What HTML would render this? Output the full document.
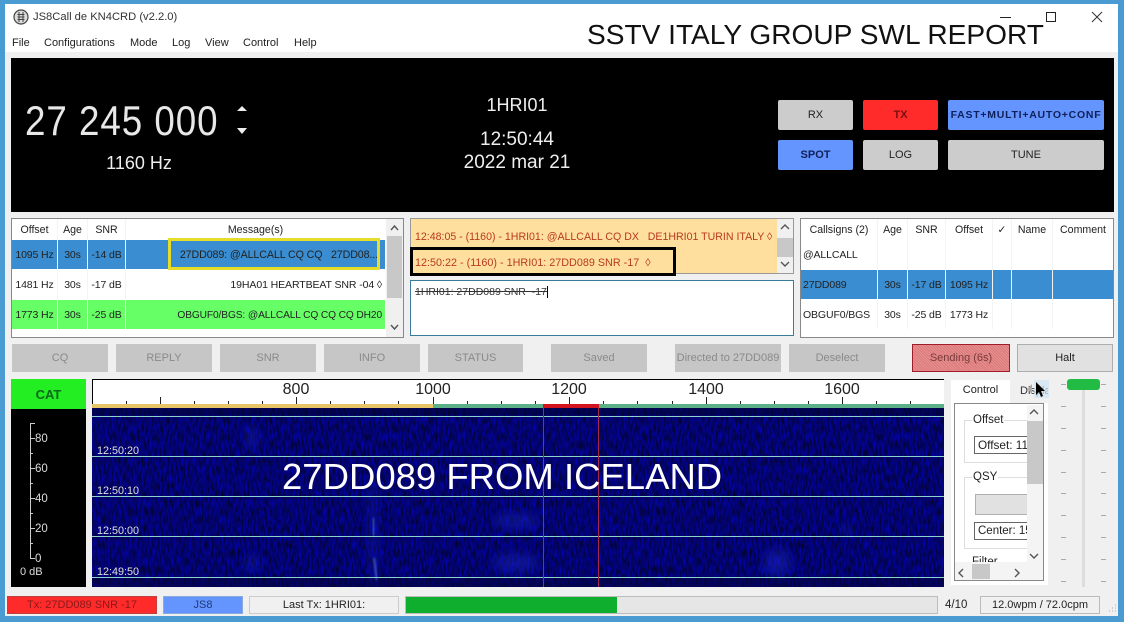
<!DOCTYPE html>
<html><head><meta charset="utf-8"><style>
html,body{margin:0;padding:0}
body{width:1124px;height:622px;overflow:hidden;position:relative;background:#4a9bd1;font-family:"Liberation Sans",sans-serif;color:#222}
div,span{position:absolute;box-sizing:border-box}
.t{white-space:nowrap;font-size:11px;line-height:14px}
.c{text-align:center}
.b{background:#c6c6c6;color:#8a8a8a;font-size:11px;text-align:center;line-height:28px;top:344px;height:28px}
.p{border-radius:2px;background:#ccc;color:#222;font-size:11px;text-align:center;line-height:30px;height:30px}
.h{top:219px;height:21px;line-height:22px;font-size:10.6px;text-align:center;color:#222;white-space:nowrap}
.cell{font-size:10.5px;letter-spacing:-.12px;line-height:31px;text-align:center;color:#222;white-space:nowrap}
.sep{width:1px;background:#f4f4f4}
</style></head><body>
<div style="left:5px;top:4px;width:1113px;height:612px;background:#f0f0f0"></div>
<div style="left:5px;top:4px;width:1113px;height:48px;background:#fff"></div>

<svg style="position:absolute;left:12px;top:8px" width="18" height="18" viewBox="0 0 18 18"><circle cx="9" cy="9" r="7" fill="#ddd" stroke="#444" stroke-width="1.2"/><path d="M7 4v10M11 4v10M5.500 6.500h7M5.500 9h7M5.500 11.500h7" stroke="#444" fill="none"/></svg>
<div class="t" style="left:33px;top:10px;font-size:11.2px;color:#333">JS8Call de KN4CRD (v2.2.0)</div>
<div class="t" style="left:12px;top:36px">File</div>
<div class="t" style="left:44px;top:36px">Configurations</div>
<div class="t" style="left:130px;top:36px">Mode</div>
<div class="t" style="left:172px;top:36px">Log</div>
<div class="t" style="left:205px;top:36px">View</div>
<div class="t" style="left:243px;top:36px">Control</div>
<div class="t" style="left:294px;top:36px">Help</div>
<div class="t" style="left:587px;top:20px;font-size:28.1px;line-height:30px;color:#111">SSTV ITALY GROUP SWL REPORT</div>
<div style="left:1000px;top:17px;width:11px;height:1px;background:#222"></div>
<div style="left:1046px;top:12px;width:10px;height:10px;border:1px solid #222"></div>
<svg style="position:absolute;left:1091px;top:11px" width="12" height="12"><path d="M1 1L11 11M11 1L1 11" stroke="#333" fill="none"/></svg>

<!-- black panel -->
<div style="left:11px;top:58px;width:1103px;height:154px;background:#000"></div>
<div class="t" style="left:25px;top:96px;color:#e8e8e8;font-size:42px;line-height:50px;transform-origin:0 50%;transform:scaleX(.875);letter-spacing:1.1px">27 245 000</div>
<svg style="position:absolute;left:235px;top:103px" width="14" height="36"><path d="M2 8L7 3L12 8ZM2 25L12 25L7 31Z" fill="#eee"/></svg>
<div class="t c" style="left:79px;top:153px;width:120px;color:#eee;font-size:18px;line-height:20px">1160 Hz</div>
<div class="t c" style="left:417px;top:95px;width:200px;color:#eee;font-size:18px;line-height:20px">1HRI01</div>
<div class="t c" style="left:417px;top:130px;width:200px;color:#eee;font-size:19px;line-height:20px">12:50:44</div>
<div class="t c" style="left:417px;top:153px;width:200px;color:#eee;font-size:19px;line-height:20px">2022 mar 21</div>

<div class="p" style="left:778px;top:100px;width:75px">RX</div>
<div class="p" style="left:863px;top:100px;width:75px;background:#ff2a2a;color:#7a1010;font-weight:bold">TX</div>
<div class="p" style="left:948px;top:100px;width:156px;background:#6495ff;color:#10205a;font-weight:bold;letter-spacing:.75px;font-size:10.5px;white-space:nowrap">FAST+MULTI+AUTO+CONF</div>
<div class="p" style="left:778px;top:140px;width:75px;background:#6495ff;color:#10205a;font-weight:bold">SPOT</div>
<div class="p" style="left:863px;top:140px;width:75px">LOG</div>
<div class="p" style="left:948px;top:140px;width:156px">TUNE</div>

<!-- left table -->
<div style="left:11px;top:218px;width:393px;height:120px;background:#fff;border:1px solid #888"></div>
<div class="h" style="left:12px;width:45px">Offset</div>
<div class="h" style="left:58px;width:29px">Age</div>
<div class="h" style="left:88px;width:37px">SNR</div>
<div class="h" style="left:126px;width:259px">Message(s)</div>
<div style="left:12px;top:240px;width:373px;height:29px;background:#3a8dd0"></div>
<div style="left:12px;top:300px;width:373px;height:29px;background:#66ff66"></div>
<div class="cell" style="left:12px;top:240px;width:45px">1095 Hz</div>
<div class="cell" style="left:58px;top:240px;width:29px">30s</div>
<div class="cell" style="left:88px;top:240px;width:37px">-14 dB</div>
<div class="cell" style="left:12px;top:270px;width:45px">1481 Hz</div>
<div class="cell" style="left:58px;top:270px;width:29px">30s</div>
<div class="cell" style="left:88px;top:270px;width:37px">-17 dB</div>
<div class="cell" style="left:12px;top:300px;width:45px">1773 Hz</div>
<div class="cell" style="left:58px;top:300px;width:29px">30s</div>
<div class="cell" style="left:88px;top:300px;width:37px">-25 dB</div>
<div class="cell" style="right:746px;top:240px;text-align:right;font-size:10.7px">27DD089: @ALLCALL CQ CQ &nbsp; 27DD08...</div>
<div class="cell" style="right:742px;top:270px;text-align:right;font-size:10.55px">19HA01 HEARTBEAT SNR -04 ◊</div>
<div class="cell" style="right:742px;top:300px;text-align:right;font-size:10.2px">OBGUF0/BGS: @ALLCALL CQ CQ CQ DH20</div>
<div class="sep" style="left:57px;top:219px;height:110px"></div>
<div class="sep" style="left:87px;top:219px;height:110px"></div>
<div class="sep" style="left:125px;top:219px;height:110px"></div>
<div style="left:168px;top:238px;width:212px;height:32px;border:3px solid #e6dc2a"></div>
<div style="left:386px;top:219px;width:17px;height:118px;background:#f0f0f0"></div>
<div style="left:387px;top:236px;width:15px;height:62px;background:#c8c8c8"></div>
<svg style="position:absolute;left:389px;top:223px" width="11" height="110"><path d="M2 7L5.500 3L9 7M2 102L5.500 106L9 102" stroke="#555" stroke-width="1.4" fill="none"/></svg>

<!-- center -->
<div style="left:410px;top:218px;width:384px;height:56px;background:#ffdf9e;border:1px solid #999"></div>
<div class="t" style="left:415px;top:230px;color:#b83a20;font-size:10.6px">12:48:05 - (1160) - 1HRI01: @ALLCALL CQ DX &nbsp; DE1HRI01 TURIN ITALY ◊</div>
<div class="t" style="left:415px;top:256px;color:#b83a20;font-size:10.8px">12:50:22 - (1160) - 1HRI01: 27DD089 SNR -17 &nbsp;◊</div>
<div style="left:777px;top:219px;width:16px;height:54px;background:#f0f0f0"></div>
<div style="left:777px;top:238px;width:16px;height:19px;background:#c8c8c8"></div>
<svg style="position:absolute;left:779px;top:222px" width="12" height="50"><path d="M2 7L6 3L10 7M2 40L6 44L10 40" stroke="#555" stroke-width="1.4" fill="none"/></svg>
<div style="left:410px;top:247px;width:266px;height:29px;border:3px solid #000"></div>
<div style="left:410px;top:280px;width:384px;height:56px;background:#fff;border:1px solid #3a7a9a"></div>
<div class="t" style="left:415px;top:285px;font-size:10.5px;text-decoration:line-through;color:#333">1HRI01: 27DD089 SNR &nbsp;-17</div>
<div style="left:547px;top:286px;width:1px;height:12px;background:#000"></div>

<!-- right table -->
<div style="left:800px;top:218px;width:314px;height:120px;background:#fff;border:1px solid #888"></div>
<div class="h" style="left:801px;width:76px">Callsigns (2)</div>
<div class="h" style="left:878px;width:29px">Age</div>
<div class="h" style="left:908px;width:37px">SNR</div>
<div class="h" style="left:946px;width:46px">Offset</div>
<div class="h" style="left:993px;width:18px">✓</div>
<div class="h" style="left:1012px;width:40px">Name</div>
<div class="h" style="left:1053px;width:60px">Comment</div>
<div style="left:801px;top:270px;width:312px;height:29px;background:#3a8dd0"></div>
<div class="cell" style="left:803px;top:240px">@ALLCALL</div>
<div class="cell" style="left:803px;top:270px">27DD089</div>
<div class="cell" style="left:878px;top:270px;width:29px">30s</div>
<div class="cell" style="left:908px;top:270px;width:37px">-17 dB</div>
<div class="cell" style="left:946px;top:270px;width:46px">1095 Hz</div>
<div class="cell" style="left:803px;top:300px">OBGUF0/BGS</div>
<div class="cell" style="left:878px;top:300px;width:29px">30s</div>
<div class="cell" style="left:908px;top:300px;width:37px">-25 dB</div>
<div class="cell" style="left:946px;top:300px;width:46px">1773 Hz</div>
<div class="sep" style="left:877px;top:219px;height:110px"></div>
<div class="sep" style="left:907px;top:219px;height:110px"></div>
<div class="sep" style="left:945px;top:219px;height:110px"></div>
<div class="sep" style="left:992px;top:219px;height:110px"></div>
<div class="sep" style="left:1011px;top:219px;height:110px"></div>
<div class="sep" style="left:1052px;top:219px;height:110px"></div>

<!-- buttons -->
<div class="b" style="left:12px;width:96px">CQ</div>
<div class="b" style="left:116px;width:96px">REPLY</div>
<div class="b" style="left:220px;width:96px">SNR</div>
<div class="b" style="left:324px;width:96px">INFO</div>
<div class="b" style="left:428px;width:95px">STATUS</div>
<div class="b" style="left:551px;width:96px">Saved</div>
<div class="b" style="left:675px;width:106px;white-space:nowrap">Directed to 27DD089</div>
<div class="b" style="left:789px;width:96px">Deselect</div>
<div class="b" style="left:912px;width:98px;line-height:26px;background:repeating-linear-gradient(45deg,#e98f8f 0 1px,#d97a7a 1px 2px);border:1px solid #a01c2c;color:#7a3a3a">Sending (6s)</div>
<div class="b" style="left:1017px;width:96px;line-height:26px;background:#e1e1e1;border:1px solid #adadad;color:#222">Halt</div>

<!-- meter -->
<div style="left:11px;top:379px;width:75px;height:30px;background:#22ee22;color:#0d6a1d;font-weight:bold;font-size:13px;line-height:31px;text-align:center">CAT</div>
<div style="left:11px;top:409px;width:75px;height:178px;background:#000"></div>
<svg style="position:absolute;left:11px;top:409px" width="75" height="178"><path d="M24 14.500H19.500V149.500H24M19 29.500H24M19 44.500H22M19 59.500H24M19 74.500H22M19 89.500H24M19 104.500H22M19 119.500H24M19 134.500H22" stroke="#ccc" fill="none"/></svg>
<div class="t" style="left:35px;top:432px;color:#ddd;font-size:11.5px">80</div>
<div class="t" style="left:35px;top:462px;color:#ddd;font-size:11.5px">60</div>
<div class="t" style="left:35px;top:492px;color:#ddd;font-size:11.5px">40</div>
<div class="t" style="left:35px;top:522px;color:#ddd;font-size:11.5px">20</div>
<div class="t" style="left:35px;top:552px;color:#ddd;font-size:11.5px">0</div>
<div class="t" style="left:20px;top:565px;color:#ddd;font-size:11px">0 dB</div>

<!-- ruler -->
<div style="left:92px;top:379px;width:852px;height:26px;background:#fff;border-top:1px solid #000;border-left:1px solid #000"></div>
<svg style="position:absolute;left:92px;top:379px" width="852" height="30">
<path d="M34.500 22v3M68.500 18v7M102.500 22v3M136.500 22v3M170.500 22v3M204.500 18v7M238.500 22v3M272.500 22v3M306.500 22v3M341.500 18v7M375.500 22v3M409.500 22v3M443.500 22v3M477.500 18v7M511.500 22v3M545.500 22v3M580.500 22v3M614.500 18v7M648.500 22v3M682.500 22v3M716.500 22v3M750.500 18v7M784.500 22v3M818.500 22v3" stroke="#222" fill="none"/>
</svg>
<div class="t c" style="left:266px;top:381px;width:60px;font-size:16px;line-height:18px">800</div>
<div class="t c" style="left:403px;top:381px;width:60px;font-size:16px;line-height:18px">1000</div>
<div class="t c" style="left:539px;top:381px;width:60px;font-size:16px;line-height:18px">1200</div>
<div class="t c" style="left:676px;top:381px;width:60px;font-size:16px;line-height:18px">1400</div>
<div class="t c" style="left:812px;top:381px;width:60px;font-size:16px;line-height:18px">1600</div>
<div style="left:92px;top:404px;width:341px;height:4px;background:#e8c468"></div>
<div style="left:433px;top:404px;width:511px;height:4px;background:#5cb088"></div>
<div style="left:543px;top:404px;width:56px;height:5px;background:#d2141e"></div>

<!-- waterfall -->
<svg style="position:absolute;left:92px;top:408px" width="852" height="179">
<defs>
<filter id="n" x="0" y="0" width="100%" height="100%" color-interpolation-filters="sRGB">
<feTurbulence type="fractalNoise" baseFrequency="0.5 0.12" numOctaves="3" seed="7"/>
<feColorMatrix type="matrix" values="0 0 0 0 0.01  0 0 0 0 0.01  1.1 0 0 0 -0.1  0 0 0 0 1"/>
</filter>
<filter id="bl"><feGaussianBlur stdDeviation="5"/></filter>
<filter id="bs"><feGaussianBlur stdDeviation="1"/></filter>
</defs>
<rect width="852" height="179" fill="#050568"/>
<rect width="852" height="179" filter="url(#n)" opacity=".7"/>
<rect y="0" width="852" height="7" fill="#03033a" opacity=".6"/>
<rect y="170" width="852" height="9" fill="#03033a" opacity=".5"/>
<g filter="url(#bl)" fill="#1a2cd0" opacity=".42">
<ellipse cx="424" cy="113" rx="24" ry="7"/><ellipse cx="424" cy="155" rx="24" ry="9"/>
<ellipse cx="160" cy="30" rx="5" ry="12"/><ellipse cx="281" cy="120" rx="3" ry="60"/>
<ellipse cx="685" cy="155" rx="14" ry="14"/><ellipse cx="755" cy="122" rx="6" ry="4"/>
<ellipse cx="160" cy="155" rx="8" ry="6"/>
</g>
<path d="M281 110V128M282 150L285 172" stroke="#5f8cff" stroke-width="1.2" filter="url(#bs)" fill="none"/>
<path d="M0 8.500H852M0 48.500H852M0 88.500H852M0 128.500H852M0 169.500H852" stroke="#8ed2c8" fill="none"/>
</svg>
<div style="left:543px;top:408px;width:1px;height:179px;background:#a8284c"></div>
<div style="left:598px;top:408px;width:1px;height:179px;background:#a8284c"></div>
<div class="t" style="left:97px;top:444px;color:#e0e0e0;font-size:10.8px">12:50:20</div>
<div class="t" style="left:97px;top:484px;color:#e0e0e0;font-size:10.8px">12:50:10</div>
<div class="t" style="left:97px;top:524px;color:#e0e0e0;font-size:10.8px">12:50:00</div>
<div class="t" style="left:97px;top:565px;color:#e0e0e0;font-size:10.8px">12:49:50</div>
<div class="t" style="left:282px;top:456px;color:#fff;font-size:36.5px;line-height:42px">27DD089 FROM ICELAND</div>

<!-- control tabs -->
<div style="left:951px;top:403px;width:97px;height:182px;background:#fff"></div>
<div style="left:951px;top:380px;width:59px;height:24px;background:#fff;font-size:11px;text-align:center;line-height:20px">Control</div>
<div class="t" style="left:1020px;top:384px;width:28px;overflow:hidden;color:#333">Display</div>
<div style="left:1034px;top:380px;width:15px;height:18px;background:#d0e4f4;opacity:.7"></div>
<svg style="position:absolute;left:1024px;top:380px" width="28" height="24"><path d="M8 4L3 9L8 14Z" fill="#aaa"/><path d="M12 2V15L15 12L17 17L19 16L17 11H21Z" fill="#000"/></svg>
<div style="left:954px;top:403px;width:90px;height:178px;background:#fff;border:1px solid #888"></div>
<div style="left:964px;top:420px;width:63px;height:43px;border:1px solid #ddd;border-right:0"></div>
<div style="left:972px;top:414px;background:#fff;padding:0 1px;font-size:11.5px;line-height:13px">Offset</div>
<div style="left:974px;top:436px;width:53px;height:18px;border:1px solid #666;border-right:0;font-size:11.8px;line-height:17px;padding-left:3px;white-space:nowrap;overflow:hidden">Offset: 1160</div>
<div style="left:964px;top:477px;width:63px;height:72px;border:1px solid #ddd;border-right:0"></div>
<div style="left:972px;top:471px;background:#fff;padding:0 1px;font-size:11.5px;line-height:13px">QSY</div>
<div style="left:975px;top:494px;width:52px;height:21px;background:#e1e1e1;border:1px solid #b0b0b0;border-right:0"></div>
<div style="left:974px;top:522px;width:53px;height:18px;border:1px solid #666;border-right:0;font-size:11.5px;line-height:17px;padding-left:3px;white-space:nowrap;overflow:hidden">Center: 1500</div>
<div style="left:972px;top:556px;width:40px;height:6px;overflow:hidden;font-size:11.5px;line-height:13px">Filter</div>
<div style="left:1027px;top:405px;width:16px;height:157px;background:#f4f4f4"></div>
<div style="left:1027px;top:421px;width:16px;height:63px;background:#c8c8c8"></div>
<div style="left:955px;top:562px;width:88px;height:18px;background:#f4f4f4"></div>
<div style="left:972px;top:564px;width:18px;height:15px;background:#c8c8c8"></div>
<svg style="position:absolute;left:955px;top:405px" width="88" height="175"><path d="M75 9L79 5L83 9M75 149L79 153L83 149" stroke="#555" stroke-width="1.4" fill="none"/><path d="M8 164L4 168L8 172M60 164L64 168L60 172" stroke="#555" stroke-width="1.4" fill="none"/></svg>

<!-- slider -->
<div style="left:1082px;top:390px;width:3px;height:197px;background:#ddd"></div>
<div style="left:1067px;top:379px;width:33px;height:11px;border-radius:3px;background:#22bb44"></div>
<svg style="position:absolute;left:1060px;top:378px" width="50" height="210"><path d="M1 6.500H6M41 6.500H46M1 28.500H6M41 28.500H46M1 50.500H6M41 50.500H46M1 72.500H6M41 72.500H46M1 94.500H6M41 94.500H46M1 115.500H6M41 115.500H46M1 137.500H6M41 137.500H46M1 159.500H6M41 159.500H46M1 181.500H6M41 181.500H46M1 203.500H6M41 203.500H46" stroke="#aaa" fill="none"/></svg>

<!-- status -->
<div style="left:7px;top:596px;width:150px;height:18px;background:#ff2a2a;border:1px solid #c04040;color:#8a1a1a;font-size:11px;text-align:center;line-height:17px;white-space:nowrap">Tx: 27DD089 SNR -17</div>
<div style="left:163px;top:596px;width:80px;height:18px;background:#6495ff;border:1px solid #88aadd;color:#223a7a;font-size:11px;text-align:center;line-height:17px">JS8</div>
<div style="left:249px;top:596px;width:150px;height:18px;background:#f0f0f0;border:1px solid #ccc;font-size:11px;text-align:center;line-height:17px">Last Tx: 1HRI01:</div>
<div style="left:405px;top:596px;width:533px;height:18px;background:#e6e6e6;border:1px solid #bcbcbc"></div>
<div style="left:406px;top:597px;width:211px;height:16px;background:#0fae2f"></div>
<div class="t" style="left:945px;top:598px;font-size:11.5px">4/10</div>
<div style="left:980px;top:596px;width:120px;height:18px;border:1px solid #bbb;font-size:11px;text-align:center;line-height:17px">12.0wpm / 72.0cpm</div>
<svg style="position:absolute;left:1106px;top:604px" width="12" height="12"><path d="M9 1h1M6 4h1M9 4h1M3 7h1M6 7h1M9 7h1" stroke="#aaa" fill="none"/></svg>
</body></html>
